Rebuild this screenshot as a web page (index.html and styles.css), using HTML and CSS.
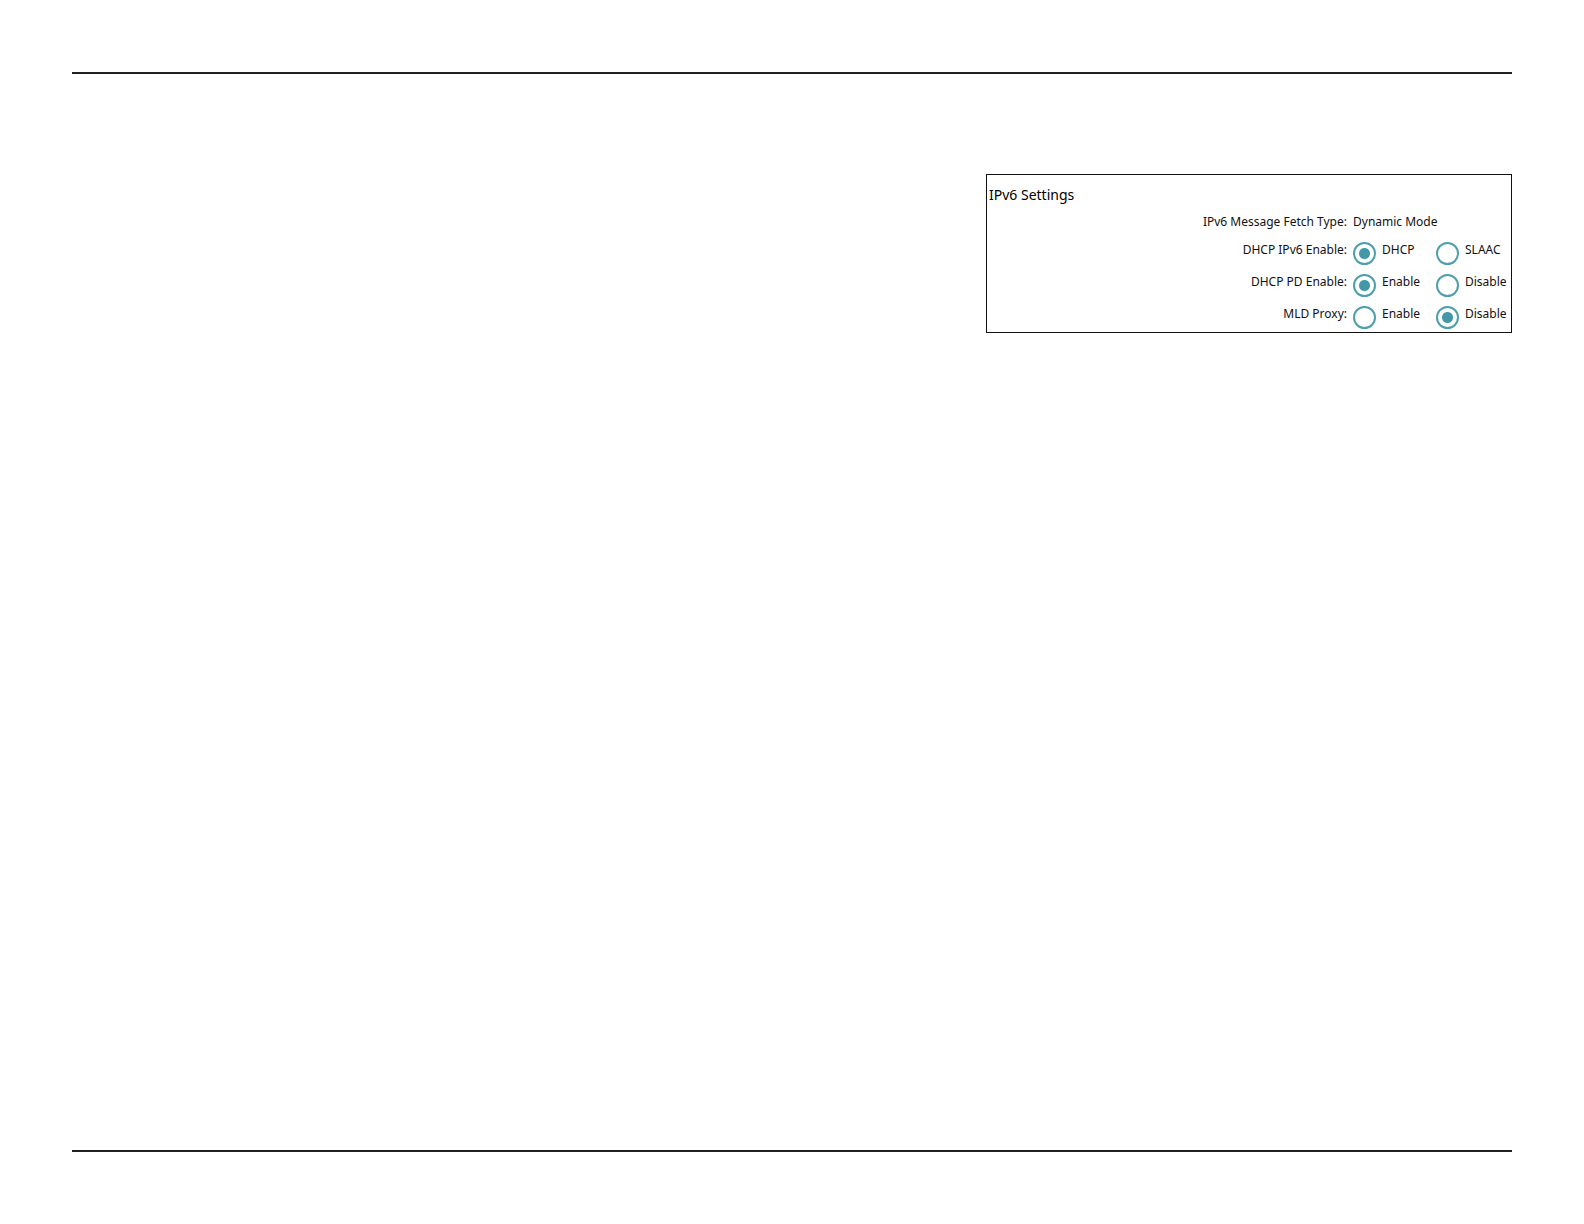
FILE: index.html
```html
<!DOCTYPE html>
<html lang="en">
<head>
    <meta charset="UTF-8">
    <meta name="viewport" content="width=device-width, initial-scale=1.0">
    <title>IPv6 Settings</title>
    <link rel="stylesheet" href="styles.css">
</head>
<body>
    <main class="page">
        <section class="panel">
            <h1>IPv6 Settings</h1>

            <div class="row row-text">
                <span class="name">IPv6 Message Fetch Type:</span>
                <span class="value">Dynamic Mode</span>
            </div>

            <!-- Radio rows -->
            <div class="row" role="radiogroup" aria-labelledby="dhcpName">
                <span class="name" id="dhcpName">DHCP IPv6 Enable:</span>
                <label class="option"><input type="radio" name="dhcpIpv6" value="dhcp" checked>DHCP</label>
                <label class="option"><input type="radio" name="dhcpIpv6" value="slaac">SLAAC</label>
            </div>
            <div class="row" role="radiogroup" aria-labelledby="pdName">
                <span class="name" id="pdName">DHCP PD Enable:</span>
                <label class="option"><input type="radio" name="dhcpPd" value="enable" checked>Enable</label>
                <label class="option"><input type="radio" name="dhcpPd" value="disable">Disable</label>
            </div>
            <div class="row" role="radiogroup" aria-labelledby="mldName">
                <span class="name" id="mldName">MLD Proxy:</span>
                <label class="option"><input type="radio" name="mldProxy" value="enable">Enable</label>
                <label class="option"><input type="radio" name="mldProxy" value="disable" checked>Disable</label>
            </div>
        </section>
    </main>
</body>
</html>
```
FILE: styles.css
```css
* {
    box-sizing: border-box;
}
body {
    margin: 0;
    padding: 72px;
    background: #fff;
    color: #111;
    font-family: "Noto Sans", sans-serif;
    font-size: 12px;
    line-height: 18px;
}
.page {
    display: flex;
    justify-content: flex-end;
    align-items: flex-start;
    min-height: calc(100vh - 144px);
    padding-top: 100px;
    border-top: 2px solid #231f20;
    border-bottom: 2px solid #231f20;
}
.panel {
    width: 100%;
    max-width: 526px;
    padding: 10px 0 3px 2px;
    border: 1px solid #111;
}
h1 {
    margin: 0 0 8px;
    font-size: 14px;
    font-weight: 400;
    line-height: 20px;
    color: #000;
}
.row {
    display: grid;
    grid-template-columns: 1fr 83px 75px;
    align-items: start;
    margin-bottom: 8px;
}
.row-text {
    margin-bottom: 10px;
}
.row:last-child {
    margin-bottom: 0;
}
.name {
    padding-right: 6px;
    text-align: right;
}
.value {
    grid-column: span 2;
}
.option {
    display: flex;
    align-items: flex-start;
    gap: 6px;
    cursor: pointer;
}
input[type="radio"] {
    appearance: none;
    flex: none;
    width: 23px;
    height: 23px;
    margin: 1px 0 0;
    border: 2px solid #4d9fae;
    border-radius: 50%;
    background: #fff;
    cursor: pointer;
}
input[type="radio"]:checked {
    background: radial-gradient(circle, #4398a8 5px, #fff 6px);
}
```
